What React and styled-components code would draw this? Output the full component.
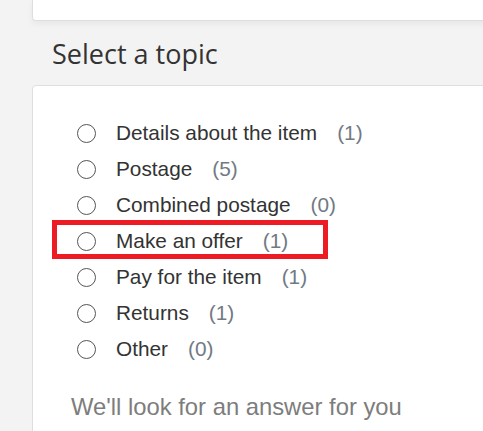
import React from "react";
import styled, { createGlobalStyle } from "styled-components";

const Global = createGlobalStyle`
  html, body { margin: 0; padding: 0; }
  body {
    background: #f3f3f3;
    font-family: "Liberation Sans", Arial, sans-serif;
    overflow: hidden;
  }
`;

const Page = styled.div`
  width: 483px;
  height: 431px;
  padding-left: 32px;
  box-sizing: border-box;
  overflow: hidden;
`;

const TopCard = styled.div`
  height: 21px;
  width: 480px;
  background: #fff;
  border: 1px solid #dedede;
  border-top: none;
  border-radius: 0 0 4px 4px;
  box-sizing: border-box;
  box-shadow: 0 3px 6px rgba(0, 0, 0, 0.05);
`;

const Heading = styled.h2`
  margin: 0;
  height: 64px;
  padding-left: 20px;
  display: flex;
  align-items: center;
  font-family: "Open Sans", "Noto Sans", sans-serif;
  font-weight: 400;
  font-size: 27px;
  color: #333;
`;

const Card = styled.div`
  width: 480px;
  background: #fff;
  border: 1px solid #dedede;
  border-radius: 4px;
  box-sizing: border-box;
  padding: 29px 0 0 44px;
  height: 400px;
`;

const List = styled.div`
  display: flex;
  flex-direction: column;
`;

const Row = styled.label`
  position: relative;
  display: flex;
  align-items: center;
  height: 36px;
  font-size: 20.8px;
  color: #333;

  &::before {
    content: "";
    display: ${(p) => (p.$selected ? "block" : "none")};
    position: absolute;
    left: -25px;
    top: -3px;
    width: 276px;
    height: 39px;
    border: 5px solid #ed1c24;
    box-sizing: border-box;
  }
`;

const Radio = styled.span`
  width: 19px;
  height: 19px;
  border: 1px solid #555;
  border-radius: 50%;
  box-sizing: border-box;
  margin-right: 20px;
  flex: none;
`;

const Count = styled.span`
  margin-left: 20px;
  color: #717a84;
`;

const Hint = styled.div`
  margin: 26px 0 0 -6px;
  font-size: 23.8px;
  color: #7d7d7d;
`;

const topics = [
  ["Details about the item", 1],
  ["Postage", 5],
  ["Combined postage", 0],
  ["Make an offer", 1, true],
  ["Pay for the item", 1],
  ["Returns", 1],
  ["Other", 0],
];

export default function App() {
  return (
    <>
      <Global />
      <Page>
        <TopCard />
        <Heading>Select a topic</Heading>
        <Card>
          <List>
            {topics.map(([label, n, sel]) => (
              <Row key={label} $selected={sel}>
                <Radio />
                {label}
                <Count>({n})</Count>
              </Row>
            ))}
          </List>
          <Hint>We'll look for an answer for you</Hint>
        </Card>
      </Page>
    </>
  );
}
